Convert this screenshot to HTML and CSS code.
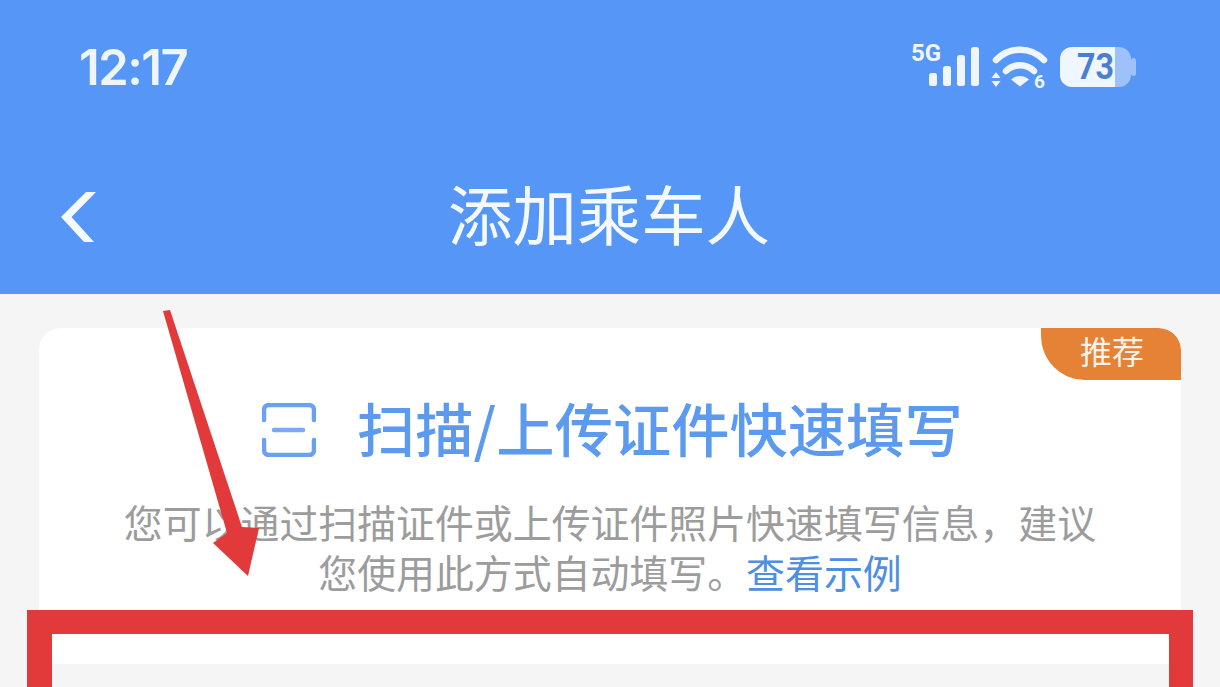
FILE: index.html
```html
<!DOCTYPE html>
<html lang="zh-CN">
<head>
<meta charset="utf-8">
<title>添加乘车人</title>
<link rel="stylesheet" href="styles.css">
</head>
<body>
<div class="page">
  <header class="header">
    <div class="status">
      <span class="time">12:17</span>
      <svg class="status-icons" viewBox="910 40 230 56" width="230" height="56">
        <text x="911" y="61" class="five-g">5G</text>
        <g fill="#f0f6ff">
          <rect x="929" y="73" width="8" height="13" rx="2.500"/>
          <rect x="943" y="66" width="8" height="20" rx="2.500"/>
          <rect x="957" y="55" width="8" height="31" rx="2.500"/>
          <rect x="971" y="47" width="8" height="39" rx="2.500"/>
          <path d="M1011 79.500a13 13 0 0 1 18 0l-9 7z"/>
          <path d="M996 72l-4.500 6h9zM996 87l-4.500-6h9z"/>
        </g>
        <path d="M996 60a33 33 0 0 1 48 0M1006 71a20 20 0 0 1 28 0" fill="none" stroke="#f0f6ff" stroke-width="6.500" stroke-linecap="round"/>
        <text x="1034" y="88" class="wifi-six">6</text>
        <path d="M1072 47h43v40h-43a12 12 0 0 1-12-12v-16a12 12 0 0 1 12-12z" fill="#f0f6ff"/>
        <path d="M1115 47h4a12 12 0 0 1 12 12v16a12 12 0 0 1-12 12h-4z" fill="#9dc1f8"/>
        <rect x="1131" y="58" width="5" height="18" rx="2.500" fill="#9dc1f8"/>
        <text x="1077" y="79" class="battery-level" textLength="37" lengthAdjust="spacingAndGlyphs">73</text>
      </svg>
    </div>
    <div class="nav">
      <svg class="back" viewBox="0 0 37 57" width="37" height="57">
        <path d="M26 2H36L11.500 27 34 52H24L1 27z" fill="#f6f9ff"/>
      </svg>
      <h1 class="nav-title">添加乘车人</h1>
    </div>
  </header>
  <main class="content">
    <section class="card">
      <span class="tag">推荐</span>
      <div class="scan-row">
        <svg class="scan-icon" viewBox="0 0 54 54" width="54" height="54">
          <path d="M2 17V7a5 5 0 0 1 5-5h40a5 5 0 0 1 5 5v10M2 37v10a5 5 0 0 0 5 5h40a5 5 0 0 0 5-5V37" fill="none" stroke="#6aa1f0" stroke-width="4.500" stroke-linecap="round"/>
          <path d="M12 27h29" fill="none" stroke="#7aaaf0" stroke-width="4.500" stroke-linecap="round"/>
        </svg>
        <h2 class="scan-title">扫描/上传证件快速填写</h2>
      </div>
      <p class="desc">您可以通过扫描证件或上传证件照片快速填写信息，建议<br>您使用此方式自动填写。<a class="link">查看示例</a></p>
    </section>
  </main>
  <div class="highlight"></div>
  <svg class="arrow" viewBox="0 0 1220 687" width="1220" height="687">
    <path d="M163 311 170 310 242 527 259 528 248 576 213 543 227 533z" fill="#e23a3a"/>
  </svg>
</div>
</body>
</html>
```
FILE: styles.css
```css
* { box-sizing: border-box; }
html, body { margin: 0; padding: 0; }
body { font-family: "Noto Sans CJK SC", "Noto Sans", sans-serif; background: #f5f5f5; }
.page { position: relative; width: 1220px; height: 687px; overflow: hidden; background: #f5f5f5; }
.header { height: 294px; background: #5596f6; color: #f4f8ff; }
.status { display: flex; justify-content: space-between; align-items: flex-start; height: 135px; padding: 40px 80px 0 79px; }
.time { font-family: Inter, Roboto, sans-serif; font-weight: 600; font-size: 49px; line-height: 56px; letter-spacing: -1.500px; color: #eef5ff; }
.status-icons { display: block; }
.five-g { font-family: Roboto, sans-serif; font-weight: 700; font-size: 24px; fill: #f0f6ff; }
.wifi-six { font-family: Roboto, sans-serif; font-weight: 700; font-size: 19px; fill: #f0f6ff; }
.battery-level { font-family: Roboto, sans-serif; font-weight: 700; font-size: 36px; fill: #4a7fd0; }
.nav { position: relative; height: 159px; }
.back { position: absolute; left: 60px; top: 55px; }
.nav-title { margin: 0; font-size: 64.4px; font-weight: 400; line-height: 80px; position: absolute; left: 448px; top: 37px; white-space: nowrap; }
.content { padding: 34px 39px 0; }
.card { position: relative; height: 336px; background: #fff; border-radius: 22px 22px 0 0; text-align: center; overflow: hidden; }
.tag { position: absolute; top: 0; right: 0; width: 140px; height: 52px; background: #e58236; color: #fbf3ea; font-size: 32px; line-height: 44px; text-align: center; border-radius: 0 22px 0 44px; padding-left: 2px; }
.scan-row { display: flex; align-items: center; height: 72px; margin-top: 66px; padding-left: 223px; gap: 41px; }
.scan-icon { display: block; flex: none; }
.scan-title { margin: 0 0 6px; font-size: 58.3px; font-weight: 500; line-height: 72px; color: #5b9aee; white-space: nowrap; }
.desc { margin: 30px 0 0; font-size: 38.900px; line-height: 50px; color: #9c9c9c; white-space: nowrap; }
.link { color: #4f8fe0; }
.highlight { position: absolute; left: 27px; top: 610px; width: 1166px; height: 140px; border: solid #e23a3a; border-width: 24px 24px 24px 25px; }
.arrow { position: absolute; left: 0; top: 0; display: block; }
```
